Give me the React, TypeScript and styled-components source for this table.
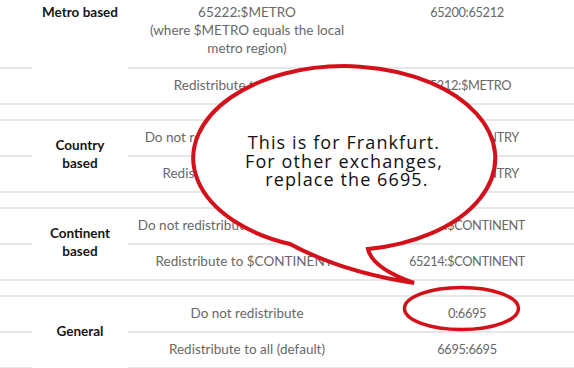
import React from 'react';
import styled, { createGlobalStyle } from 'styled-components';

const GlobalStyle = createGlobalStyle`
  html, body {
    margin: 0;
    padding: 0;
    background: #ffffff;
    overflow: hidden;
  }
`;

const Page = styled.div`
  position: relative;
  width: 574px;
  height: 368px;
  overflow: hidden;
  font-family: Lato, "Open Sans", sans-serif;
`;

const Table = styled.div`
  display: flex;
  flex-direction: column;
  gap: 14px;
`;

interface GroupProps {
  $noTop?: boolean;
}

const Group = styled.div<GroupProps>`
  display: grid;
  grid-template-columns: 32px 96px 238px 1fr;
  border-top: ${(props) => (props.$noTop ? 'none' : '2px solid #e6e6e6')};
  border-bottom: 2px solid #e6e6e6;
`;

interface CellProps {
  $last?: boolean;
  $top?: boolean;
}

const Spacer = styled.div<CellProps>`
  grid-column: 1;
  border-bottom: ${(props) => (props.$last ? 'none' : '2px solid #e6e6e6')};
`;

const Value = styled.div<CellProps>`
  display: flex;
  justify-content: center;
  align-items: ${(props) => (props.$top ? 'flex-start' : 'center')};
  min-height: 31px;
  padding: ${(props) => (props.$top ? '3px 8px 10px' : '0 8px 3px')};
  text-align: center;
  font-size: 13.5px;
  line-height: 18px;
  color: #686868;
  border-bottom: ${(props) => (props.$last ? 'none' : '2px solid #e6e6e6')};
`;

const Middle = styled(Value)`
  grid-column: 3;
`;

const Right = styled(Value)`
  grid-column: 4;
  padding-right: 14px;
  font-size: 12.8px;
  letter-spacing: -0.35px;
`;

interface LabelProps {
  $rows: number;
  $top?: boolean;
}

const Label = styled.div<LabelProps>`
  grid-column: 2;
  grid-row: 1 / span ${(props) => props.$rows};
  display: flex;
  align-items: ${(props) => (props.$top ? 'flex-start' : 'center')};
  justify-content: center;
  padding-top: ${(props) => (props.$top ? '3px' : '0')};
  padding-bottom: ${(props) => (props.$top ? '0' : '4px')};
  text-align: center;
  font-size: 13.5px;
  line-height: 18px;
  font-weight: 700;
  color: #151515;
`;

const Callout = styled.div`
  position: absolute;
  inset: 0;
  pointer-events: none;
`;

const Bubble = styled.svg`
  position: absolute;
  left: 0;
  top: 0;
`;

const BubbleText = styled.div`
  position: absolute;
  left: 224px;
  top: 133px;
  width: 240px;
  text-align: center;
  font-family: "Open Sans", "Liberation Sans", sans-serif;
  font-size: 18px;
  line-height: 18.5px;
  letter-spacing: 1.1px;
  color: #111111;
  white-space: pre;
`;

interface Row {
  middle: React.ReactNode;
  right: string;
}

interface GroupData {
  label: React.ReactNode;
  rows: Row[];
  top?: boolean;
}

const groups: GroupData[] = [
  {
    label: 'Metro based',
    top: true,
    rows: [
      {
        middle: (
          <span>
            65222:$METRO
            <br />
            (where $METRO equals the local
            <br />
            metro region)
          </span>
        ),
        right: '65200:65212',
      },
      { middle: 'Redistribute to $METRO', right: '65212:$METRO' },
    ],
  },
  {
    label: (
      <span>
        Country
        <br />
        based
      </span>
    ),
    rows: [
      { middle: 'Do not redistribute to $COUNTRY', right: '65203:$COUNTRY' },
      { middle: 'Redistribute to $COUNTRY*', right: '65213:$COUNTRY' },
    ],
  },
  {
    label: (
      <span>
        Continent
        <br />
        based
      </span>
    ),
    rows: [
      { middle: 'Do not redistribute to $CONTINENT', right: '65204:$CONTINENT' },
      { middle: 'Redistribute to $CONTINENT*', right: '65214:$CONTINENT' },
    ],
  },
  {
    label: 'General',
    rows: [
      { middle: 'Do not redistribute', right: '0:6695' },
      { middle: 'Redistribute to all (default)', right: '6695:6695' },
    ],
  },
];

function App() {
  return (
    <Page>
      <GlobalStyle />
      <Table>
        {groups.map((group, gi) => (
          <Group key={gi} $noTop={gi === 0}>
            <Label $rows={group.rows.length} $top={group.top}>
              {group.label}
            </Label>
            {group.rows.map((row, ri) => {
              const last = ri === group.rows.length - 1 && gi !== groups.length - 1;
              const top = group.top && ri === 0;
              return (
                <React.Fragment key={ri}>
                  <Spacer $last={last} style={{ gridRow: ri + 1 }} />
                  <Middle $last={last} $top={top} style={{ gridRow: ri + 1 }}>
                    {row.middle}
                  </Middle>
                  <Right $last={last} $top={top} style={{ gridRow: ri + 1 }}>
                    {row.right}
                  </Right>
                </React.Fragment>
              );
            })}
          </Group>
        ))}
      </Table>
      <Callout>
        <Bubble width="574" height="368" viewBox="0 0 574 368">
          <path
            d="M290 244 A151 92 0 1 1 368 249 Q372 268 414 283 Q342 272 290 244 Z"
            fill="#ffffff"
            stroke="#d4101a"
            strokeWidth="4"
            strokeLinejoin="miter"
          />
          <ellipse
            cx="461.5"
            cy="308.5"
            rx="57"
            ry="21"
            fill="none"
            stroke="#d4101a"
            strokeWidth="3.5"
          />
        </Bubble>
        <BubbleText>
          {'This is for Frankfurt.\nFor other exchanges,\n replace the 6695.'}
        </BubbleText>
      </Callout>
    </Page>
  );
}

export default App;
